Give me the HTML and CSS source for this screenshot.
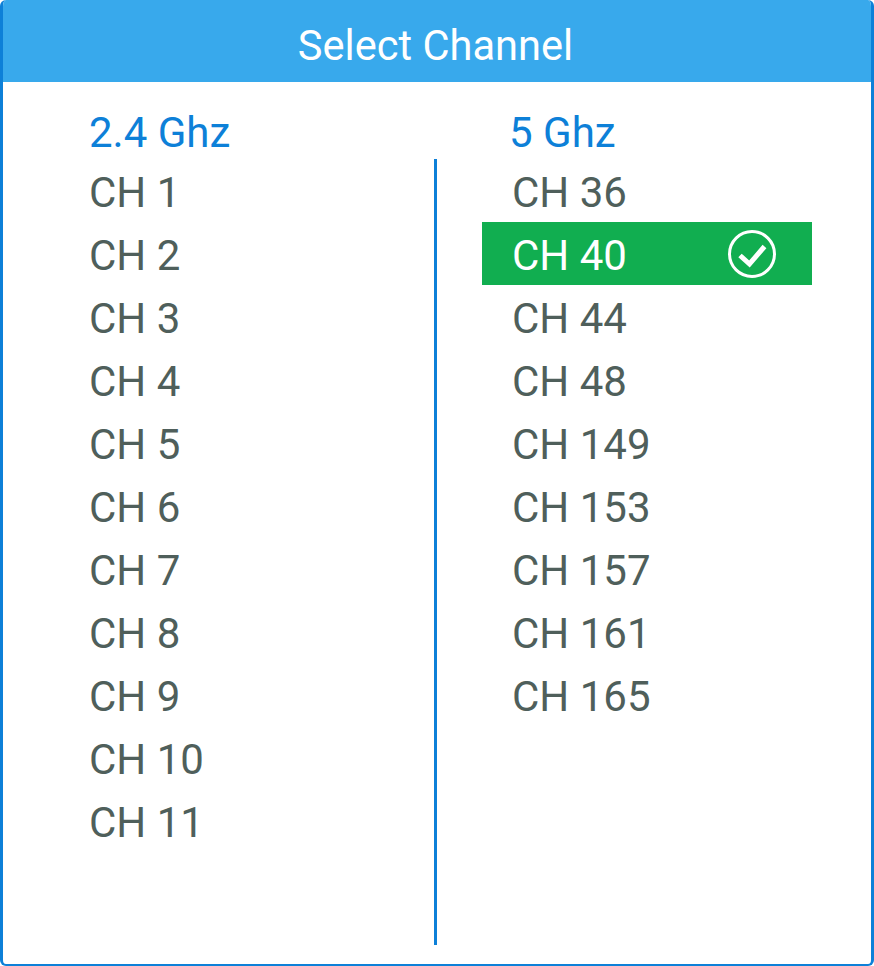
FILE: index.html
```html
<!DOCTYPE html>
<html>

<head>
  <meta charset="utf-8">
  <meta name="viewport" content="width=device-width">
  <title>Select Channel</title>

  <link rel="stylesheet" href="styles.css">
</head>

<body>
  <main class="dialog">
    <header class="title">Select Channel</header>

    <section class="channels">
      <h2 class="band">2.4 Ghz</h2>
      <h2 class="band band-right">5 Ghz</h2>

      <ul class="list list-left">
        <li class="row">CH 1</li>
        <li class="row">CH 2</li>
        <li class="row">CH 3</li>
        <li class="row">CH 4</li>
        <li class="row">CH 5</li>
        <li class="row">CH 6</li>
        <li class="row">CH 7</li>
        <li class="row">CH 8</li>
        <li class="row">CH 9</li>
        <li class="row">CH 10</li>
        <li class="row">CH 11</li>
      </ul>

      <ul class="list list-right">
        <li class="row">CH 36</li>
        <li class="row selected">
          CH 40
          <svg class="check" viewBox="0 0 48 48" width="48" height="48">
            <circle cx="24" cy="24" r="22.5" fill="none" stroke="#fff" stroke-width="3"/>
            <path d="M12 25.5 L21.5 34 L36.5 16.5" fill="none" stroke="#fff" stroke-width="5"/>
          </svg>
        </li>
        <li class="row">CH 44</li>
        <li class="row">CH 48</li>
        <li class="row">CH 149</li>
        <li class="row">CH 153</li>
        <li class="row">CH 157</li>
        <li class="row">CH 161</li>
        <li class="row">CH 165</li>
      </ul>
    </section>
  </main>
</body>

</html>
```

FILE: styles.css
```css
* {
  box-sizing: border-box;
}

body {
  margin: 0;
  background-color: white;
  font-family: Roboto, "Liberation Sans", sans-serif;
}

.dialog {
  display: flex;
  flex-direction: column;
  height: 966px;
  background-color: white;
  border: 3px solid #0d80d8;
  border-top: 0;
  border-bottom-width: 2px;
  border-radius: 6px;
  overflow: hidden;
}

.title {
  height: 82px;
  padding-right: 3px;
  line-height: 91px;
  flex-shrink: 0;
  text-align: center;
  color: white;
  font-size: 41.6px;
  background-color: #38a9ec;
}

.channels {
  display: grid;
  flex-grow: 1;
  grid-template-columns: 434px 1fr;
  grid-template-rows: 77px 1fr;
  padding-bottom: 19px;
}

.band {
  margin: 0;
  padding: 19px 0 0 86px;
  color: #0d80d8;
  font-size: 42px;
  font-weight: normal;
  line-height: 63px;
}

.band-right {
  padding-left: 72px;
}

.list {
  margin: 0;
  padding: 0;
  list-style: none;
}

.list-left {
  padding-left: 86px;
  border-right: 3px solid #0d80d8;
}

.list-right {
  padding-left: 45px;
  padding-right: 59px;
}

.row {
  display: flex;
  align-items: center;
  justify-content: space-between;
  height: 63px;
  padding-top: 4px;
  color: #4f5f5b;
  font-size: 42px;
}

.list-right .row {
  padding-left: 30px;
  padding-right: 36px;
}

.selected {
  color: white;
  background-color: #11ae50;
}

.list-right .selected {
  color: white;
}

.check {
  margin-top: -4px;
}
```
